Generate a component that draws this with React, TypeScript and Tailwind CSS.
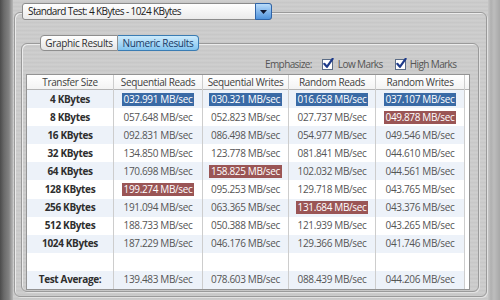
import React from "react";

type Hl = "b" | "r" | null;

const rows: { label: string; v: string[]; h: Hl[] }[] = [
  { label: "4 KBytes", v: ["032.991", "030.321", "016.658", "037.107"], h: ["b", "b", "b", "b"] },
  { label: "8 KBytes", v: ["057.648", "052.823", "027.737", "049.878"], h: [null, null, null, "r"] },
  { label: "16 KBytes", v: ["092.831", "086.498", "054.977", "049.546"], h: [null, null, null, null] },
  { label: "32 KBytes", v: ["134.850", "123.778", "081.841", "044.610"], h: [null, null, null, null] },
  { label: "64 KBytes", v: ["170.698", "158.825", "102.032", "044.561"], h: [null, "r", null, null] },
  { label: "128 KBytes", v: ["199.274", "095.253", "129.718", "043.765"], h: ["r", null, null, null] },
  { label: "256 KBytes", v: ["191.094", "063.365", "131.684", "043.376"], h: [null, null, "r", null] },
  { label: "512 KBytes", v: ["188.733", "050.388", "121.939", "043.265"], h: [null, null, null, null] },
  { label: "1024 KBytes", v: ["187.229", "046.176", "129.366", "041.746"], h: [null, null, null, null] },
  { label: "", v: ["", "", "", ""], h: [null, null, null, null] },
  { label: "Test Average:", v: ["139.483", "078.603", "088.439", "044.206"], h: [null, null, null, null] },
];

const headers = ["Transfer Size", "Sequential Reads", "Sequential Writes", "Random Reads", "Random Writes"];

function Check() {
  return (
    <svg width="12" height="12" viewBox="0 0 12 12" className="shrink-0">
      <rect x="0.5" y="1.5" width="10" height="10" fill="#ffffff" stroke="#5b6c86" />
      <path d="M2.3 5.8 L4.9 8.8 L10.6 0.8" stroke="#1d3a8a" strokeWidth="2.2" fill="none" strokeLinecap="round" strokeLinejoin="round" />
    </svg>
  );
}

function ValueCell({ text, hl, tint }: { text: string; hl: Hl; tint: boolean }) {
  return (
    <div
      className={`h-[18.1px] flex items-center justify-center border-r border-[#cdcdcd] ${tint ? "bg-[#edf2f9]" : "bg-white"}`}
    >
      {text === "" ? null : hl === "b" ? (
        <span className="px-[2px] h-[13px] leading-[13px] bg-[#3a6aa5] text-white">{text} MB/sec</span>
      ) : hl === "r" ? (
        <span className="px-[2px] h-[13px] leading-[13px] bg-[#9a5555] text-white">{text} MB/sec</span>
      ) : (
        <span className="text-[#555555]">{text} MB/sec</span>
      )}
    </div>
  );
}

export default function App() {
  return (
    <div className="w-[500px] h-[300px] flex overflow-hidden font-['Open_Sans',sans-serif] tracking-[-0.35px] text-[10px] bg-[#cbcbcb]">
      <div className="w-[13px] h-full shrink-0 bg-[linear-gradient(90deg,#4c4c4c_0px,#6a6a6a_4px,#828282_9px,#b8b8b8_13px)]" />
      <div className="w-[475px] h-full shrink-0 flex flex-col bg-[image:repeating-linear-gradient(180deg,#cbcbcb_0px,#d2d2d2_1px,#c6c6c6_2px,#cdcdcd_4px)]">
        {/* dropdown */}
        <div className="relative z-10 mt-[3px] ml-[9px] w-[250px] h-[17px] flex border border-[#8c8c8c] rounded-[3px] bg-gradient-to-b from-white to-[#ebebeb]">
          <div className="flex-1 flex items-center pl-[5px] text-[#202020] tracking-[-0.6px]">Standard Test: 4 KBytes - 1024 KBytes</div>
          <div className="w-[17px] -my-px -mr-px h-[17px] flex items-center justify-center rounded-r-[3px] border border-[#2f64a8] bg-gradient-to-b from-[#b9dcfa] to-[#4f93dc]">
            <svg width="7" height="4" viewBox="0 0 7 4">
              <path d="M0 0 L7 0 L3.5 4 Z" fill="#101830" />
            </svg>
          </div>
        </div>
        {/* outer group box */}
        <div className="-mt-[8px] ml-[1px] w-[473px] h-[285px] flex flex-col border border-[#9a9a9a] rounded-[6px] shadow-[inset_1px_1px_0_#ececec,1px_1px_0_#e2e2e2]">
          {/* tabs */}
          <div className="relative z-10 mt-[22px] ml-[25px] flex h-[16px]">
            <div className="w-[78px] h-full flex items-center justify-center rounded-l-[4px] border border-[#8e8e8e] bg-gradient-to-b from-white to-[#e4e4e4] text-[#303030]">
              Graphic Results
            </div>
            <div className="w-[81px] h-full flex items-center justify-center rounded-r-[4px] border border-l-0 border-[#3a7cb3] bg-gradient-to-b from-[#cdebfc] to-[#82c4ef] text-[#193a66]">
              Numeric Results
            </div>
          </div>
          {/* inner group box */}
          <div className="-mt-[8px] ml-[6px] w-[458px] h-[249px] flex flex-col border border-[#9a9a9a] rounded-[6px] shadow-[inset_1px_1px_0_#ececec,1px_1px_0_#e2e2e2]">
            <div className="mt-[13px] h-[14px] pl-[243px] flex items-center text-[#555555] tracking-[-0.6px]">
              <span>Emphasize:</span>
              <span className="ml-[10px]"><Check /></span>
              <span className="ml-[4px]">Low Marks</span>
              <span className="ml-[12px]"><Check /></span>
              <span className="ml-[3px]">High Marks</span>
            </div>
            {/* table */}
            <div className="mt-[3px] ml-[4px] w-[444px] border border-[#939393] bg-white">
              <div className="grid grid-cols-[87px_89px_86px_87px_89px_4px] h-[15px] border-b border-[#b4b4b4] bg-gradient-to-b from-white to-[#f3f3f3]">
                {headers.map((h) => (
                  <div key={h} className="flex items-center justify-center border-r border-[#cdcdcd] text-[#404040]">
                    {h}
                  </div>
                ))}
                <div />
              </div>
              {rows.map((r, i) => {
                const tint = i % 2 === 0;
                return (
                  <div key={i} className="grid grid-cols-[87px_89px_86px_87px_89px_4px]">
                    <div
                      className={`h-[18.1px] flex items-center justify-center border-r border-[#cdcdcd] font-bold text-[#2e2e2e] ${tint ? "bg-[#edf2f9]" : "bg-white"}`}
                    >
                      {r.label}
                    </div>
                    {r.v.map((v, j) => (
                      <ValueCell key={j} text={v} hl={r.h[j]} tint={tint} />
                    ))}
                    <div className="bg-white" />
                  </div>
                );
              })}
            </div>
          </div>
        </div>
      </div>
      <div className="flex-1 h-full bg-[linear-gradient(90deg,#c6c6c6_0px,#b0b0b0_3px,#bdbdbd_6px,#a8a8a8_12px)]" />
    </div>
  );
}
